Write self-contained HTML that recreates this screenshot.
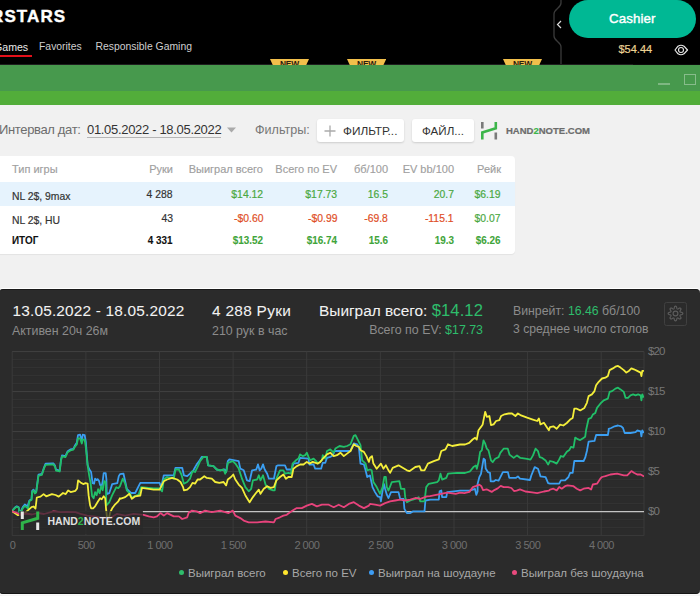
<!DOCTYPE html>
<html><head><meta charset="utf-8">
<style>
*{margin:0;padding:0;box-sizing:border-box}
html,body{width:700px;height:596px;overflow:hidden;background:#f1f1f1;font-family:"Liberation Sans",sans-serif}
.a{position:absolute;white-space:nowrap}
#hdr{position:absolute;left:0;top:0;width:700px;height:64px;background:#000}
#g1{position:absolute;left:0;top:65px;width:700px;height:26px;background:#47994d}
#g2{position:absolute;left:0;top:91px;width:700px;height:14px;background:#52ad3a}
#tbl{position:absolute;left:-6px;top:156px;width:521px;height:98px;background:#fff;border-radius:4px;box-shadow:0 1px 1px rgba(0,0,0,.06)}
#panel{position:absolute;left:-1.5px;top:288.5px;width:701px;height:305.5px;background:#2b2b2b;border-radius:4px;border-top:1.5px solid #1a1a1a;border-bottom:1.2px solid #161616;box-shadow:0 -1px 0 #fff,0 1.5px 0 #fbfbfb}
.h{font-size:11px;color:#a0a0a0;-webkit-text-stroke:0.15px currentColor}
.b{font-size:11.8px;color:#333;letter-spacing:0px;-webkit-text-stroke:0.2px currentColor;transform:scaleX(0.88);transform-origin:left;margin-top:-1px}
.b.r{transform-origin:right}
.g{color:#4aa83f}
.rd{color:#e04e26}
.bd{font-weight:bold;color:#111;letter-spacing:0px;-webkit-text-stroke:0.1px currentColor;transform:scaleX(0.84)}
.g.bd{color:#3fa53a}
.yl{font-size:11.5px;color:#777;letter-spacing:-0.9px}
.xl{font-size:11px;color:#6f6f6f;width:80px;text-align:center;letter-spacing:-0.5px;margin-top:1px;text-indent:0.5px}
.lg{font-size:11.5px;color:#a8a8a8}
.lg i{display:inline-block;width:5px;height:5px;border-radius:50%;margin-right:4px;vertical-align:2px}
</style></head><body>
<div id="hdr">
  <div class="a" style="left:-9px;top:7px;font-size:17px;font-weight:bold;color:#fff;letter-spacing:1.1px;-webkit-text-stroke:0.4px #fff">RSTARS</div>
  <div class="a" style="left:-6px;top:40.5px;font-size:10.6px;color:#e8e8e8">Games</div>
  <div style="position:absolute;left:0;top:55px;width:32px;height:2px;background:#e3101a"></div>
  <div class="a" style="left:39px;top:40.5px;font-size:10.4px;color:#cfcfcf">Favorites</div>
  <div class="a" style="left:95.5px;top:40.5px;font-size:10.4px;color:#cfcfcf">Responsible Gaming</div>
  <div style="position:absolute;left:0;top:63.5px;width:633px;height:1.5px;background:#1e1e1e"></div><svg style="position:absolute;left:270px;top:58.5px" width="39.0" height="6.5"><path d="M0 0 H39.0 L36.0 6.5 H3 Z" fill="#f2bf4b"/><text x="19.5" y="8.4" font-family="Liberation Sans" font-size="8.4" font-weight="bold" letter-spacing="-0.2" text-anchor="middle" fill="#2a2010">NEW</text></svg><svg style="position:absolute;left:346.5px;top:58.5px" width="39.2" height="6.5"><path d="M0 0 H39.2 L36.2 6.5 H3 Z" fill="#f2bf4b"/><text x="19.6" y="8.4" font-family="Liberation Sans" font-size="8.4" font-weight="bold" letter-spacing="-0.2" text-anchor="middle" fill="#2a2010">NEW</text></svg><svg style="position:absolute;left:503px;top:58.5px" width="39.0" height="6.5"><path d="M0 0 H39.0 L36.0 6.5 H3 Z" fill="#f2bf4b"/><text x="19.5" y="8.4" font-family="Liberation Sans" font-size="8.4" font-weight="bold" letter-spacing="-0.2" text-anchor="middle" fill="#2a2010">NEW</text></svg><div style="position:absolute;left:633px;top:64px;width:67px;height:1px;background:#0c0c0c"></div>
  <svg style="position:absolute;left:548px;top:0" width="20" height="64"><path d="M13 0 V3 C13 8 6 9 6 14 V36 C6 41 13 42 13 47 V64" stroke="#3a3a3a" stroke-width="1.3" fill="none"/><path d="M13 21 L9.5 24.5 L13 28" stroke="#ddd" stroke-width="1.2" fill="none"/></svg>
  <div style="position:absolute;left:569px;top:0;width:127px;height:38px;background:#00b894;border-radius:19px"></div>
  <div class="a" style="left:609px;top:10.5px;font-size:13.3px;letter-spacing:0.1px;-webkit-text-stroke:0.4px #fff;color:#fff">Cashier</div>
  <div class="a" style="left:618.5px;top:43px;font-size:11px;-webkit-text-stroke:0.2px #ecd294;color:#ecd294">$54.44</div>
  <svg style="position:absolute;left:673.2px;top:43.9px" width="16" height="12"><path d="M2 6 L5 2.2 Q8 0.3 11 2.2 L14.5 6 L11 9.8 Q8 11.7 5 9.8 Z" stroke="#e8e8e8" stroke-width="1.2" fill="none" stroke-linejoin="round"/><circle cx="8" cy="6" r="2.5" stroke="#e8e8e8" stroke-width="1.1" fill="none"/></svg>
</div>
<div id="g1"><div style="position:absolute;left:658px;top:18px;width:12px;height:1.5px;background:rgba(255,255,255,.3)"></div><div style="position:absolute;left:684px;top:9px;width:11.5px;height:11px;border:1px solid rgba(255,255,255,.35)"></div></div><div id="g2"></div>

<div id="filt">
  <div class="a" style="left:-1px;top:122px;font-size:13px;letter-spacing:-0.35px;color:#6d6d6d">Интервал дат:</div>
  <div class="a" style="left:87px;top:122px;font-size:13px;letter-spacing:-0.32px;color:#333">01.05.2022 - 18.05.2022</div>
  <div style="position:absolute;left:87px;top:137px;width:134px;height:1px;background:#b5b5b5"></div>
  <svg style="position:absolute;left:226px;top:127px" width="11" height="6"><path d="M1 0.5 H10 L5.5 5.5Z" fill="#aaa"/></svg>
  <div class="a" style="left:255px;top:123px;font-size:12.6px;color:#777">Фильтры:</div>
  <div style="position:absolute;left:317px;top:119px;width:87px;height:23px;background:#fff;border-radius:3px;box-shadow:0 1px 2px rgba(0,0,0,.15)"></div>
  <svg style="position:absolute;left:324px;top:125px" width="12" height="12"><path d="M6 0.5 V11.5 M0.5 6 H11.5" stroke="#aaa" stroke-width="1.3"/></svg>
  <div class="a" style="left:343px;top:124px;font-size:11.8px;color:#333">ФИЛЬТР...</div>
  <div style="position:absolute;left:412px;top:119px;width:62px;height:23px;background:#fff;border-radius:3px;box-shadow:0 1px 2px rgba(0,0,0,.15)"></div>
  <div class="a" style="left:422px;top:124px;font-size:11.6px;color:#333">ФАЙЛ...</div>
  <svg style="position:absolute;left:478px;top:119px" width="24" height="24"><path d="M4.3 3 V9.6 M17.8 13.4 V20.6" stroke="#7a7a7a" stroke-width="2.6"/><path d="M4.3 20.6 V13.4 L17.8 9.2 V3" stroke="#3cb54a" stroke-width="2.6" fill="none"/></svg>
  <div class="a" style="left:506px;top:125px;font-size:9.5px;font-weight:bold;color:#6c6c6c;-webkit-text-stroke:0.2px currentColor">HAND<span style="color:#3cb54a">2</span>NOTE.COM</div>
</div>
<div id="tbl">
  <div style="position:absolute;left:0;top:26px;width:521px;height:24px;background:#e6f3fd"></div>
</div>
<div id="tt">
  <div class="a h" style="left:12px;top:163px">Тип игры</div>
  <div class="a h r" style="right:527px;top:163px">Руки</div>
  <div class="a h r" style="right:437px;top:163px">Выиграл всего</div>
  <div class="a h r" style="right:363px;top:163px">Всего по EV</div>
  <div class="a h r" style="right:312px;top:163px">бб/100</div>
  <div class="a h r" style="right:246px;top:163px">EV bb/100</div>
  <div class="a h r" style="right:199px;top:163px">Рейк</div>

  <div class="a b" style="left:12px;top:189.5px">NL 2$, 9max</div>
  <div class="a b r" style="right:527px;top:187.5px">4 288</div>
  <div class="a b r g" style="right:437px;top:187.5px">$14.12</div>
  <div class="a b r g" style="right:363px;top:187.5px">$17.73</div>
  <div class="a b r g" style="right:312px;top:187.5px">16.5</div>
  <div class="a b r g" style="right:246px;top:187.5px">20.7</div>
  <div class="a b r g" style="right:199px;top:187.5px">$6.19</div>

  <div class="a b" style="left:12px;top:213.5px">NL 2$, HU</div>
  <div class="a b r" style="right:527px;top:211.5px">43</div>
  <div class="a b r rd" style="right:437px;top:211.5px">-$0.60</div>
  <div class="a b r rd" style="right:363px;top:211.5px">-$0.99</div>
  <div class="a b r rd" style="right:312px;top:211.5px">-69.8</div>
  <div class="a b r rd" style="right:246px;top:211.5px">-115.1</div>
  <div class="a b r g" style="right:199px;top:211.5px">$0.07</div>

  <div class="a b bd" style="left:12px;top:234px">ИТОГ</div>
  <div class="a b r bd" style="right:527px;top:234px">4 331</div>
  <div class="a b r g bd" style="right:437px;top:234px">$13.52</div>
  <div class="a b r g bd" style="right:363px;top:234px">$16.74</div>
  <div class="a b r g bd" style="right:312px;top:234px">15.6</div>
  <div class="a b r g bd" style="right:246px;top:234px">19.3</div>
  <div class="a b r g bd" style="right:199px;top:234px">$6.26</div>
</div>
<div id="panel"></div>

<div id="ph">
  <div class="a" style="left:12.5px;top:302px;font-size:15.4px;letter-spacing:0.18px;-webkit-text-stroke:0.05px #f2f2f2;color:#f2f2f2">13.05.2022 - 18.05.2022</div>
  <div class="a" style="left:12px;top:324px;font-size:12.4px;color:#8c8c8c">Активен 20ч 26м</div>
  <div class="a" style="left:212px;top:302px;font-size:15.4px;letter-spacing:0.3px;-webkit-text-stroke:0.05px #f2f2f2;color:#f2f2f2">4 288 Руки</div>
  <div class="a" style="left:212px;top:324px;font-size:12.4px;color:#8c8c8c">210 рук в час</div>
  <div class="a" style="right:217px;top:301px;font-size:15.4px;letter-spacing:0px;-webkit-text-stroke:0.05px #f2f2f2;color:#f2f2f2">Выиграл всего: <span style="font-size:16.6px;color:#2ebd6b;-webkit-text-stroke:0;letter-spacing:0.1px">$14.12</span></div>
  <div class="a" style="right:217px;top:323px;font-size:12.4px;color:#8c8c8c">Всего по EV: <span style="color:#2ebd6b">$17.73</span></div>
  <div class="a" style="left:513px;top:304px;font-size:12.3px;color:#8c8c8c">Винрейт: <span style="color:#2ebd6b">16.46</span> бб/100</div>
  <div class="a" style="left:513px;top:321.5px;font-size:12.2px;color:#8c8c8c">3 среднее число столов</div>
  <div style="position:absolute;left:663.5px;top:302px;width:23.5px;height:23.5px;border:1px solid #404040;border-radius:2.5px"></div>
  <svg style="position:absolute;left:666.8px;top:305.1px" width="17" height="17" viewBox="0 0 17 17"><path d="M8.50 1.15 L8.73 1.18 L8.95 1.27 L9.17 1.43 L9.37 1.65 L9.54 1.93 L9.68 2.33 L9.75 2.92 L9.85 3.26 L9.95 3.52 L10.05 3.72 L10.16 3.88 L10.29 3.98 L10.43 4.04 L10.59 4.06 L10.78 4.03 L11.00 3.95 L11.26 3.84 L11.56 3.68 L12.03 3.31 L12.41 3.12 L12.73 3.04 L13.03 3.03 L13.29 3.07 L13.51 3.16 L13.70 3.30 L13.84 3.49 L13.93 3.71 L13.97 3.97 L13.96 4.27 L13.88 4.59 L13.69 4.97 L13.32 5.44 L13.16 5.74 L13.05 6.00 L12.97 6.22 L12.94 6.41 L12.96 6.57 L13.02 6.71 L13.12 6.84 L13.28 6.95 L13.48 7.05 L13.74 7.15 L14.08 7.25 L14.67 7.32 L15.07 7.46 L15.35 7.63 L15.57 7.83 L15.73 8.05 L15.82 8.27 L15.85 8.50 L15.82 8.73 L15.73 8.95 L15.57 9.17 L15.35 9.37 L15.07 9.54 L14.67 9.68 L14.08 9.75 L13.74 9.85 L13.48 9.95 L13.28 10.05 L13.12 10.16 L13.02 10.29 L12.96 10.43 L12.94 10.59 L12.97 10.78 L13.05 11.00 L13.16 11.26 L13.32 11.56 L13.69 12.03 L13.88 12.41 L13.96 12.73 L13.97 13.03 L13.93 13.29 L13.84 13.51 L13.70 13.70 L13.51 13.84 L13.29 13.93 L13.03 13.97 L12.73 13.96 L12.41 13.88 L12.03 13.69 L11.56 13.32 L11.26 13.16 L11.00 13.05 L10.78 12.97 L10.59 12.94 L10.43 12.96 L10.29 13.02 L10.16 13.12 L10.05 13.28 L9.95 13.48 L9.85 13.74 L9.75 14.08 L9.68 14.67 L9.54 15.07 L9.37 15.35 L9.17 15.57 L8.95 15.73 L8.73 15.82 L8.50 15.85 L8.27 15.82 L8.05 15.73 L7.83 15.57 L7.63 15.35 L7.46 15.07 L7.32 14.67 L7.25 14.08 L7.15 13.74 L7.05 13.48 L6.95 13.28 L6.84 13.12 L6.71 13.02 L6.57 12.96 L6.41 12.94 L6.22 12.97 L6.00 13.05 L5.74 13.16 L5.44 13.32 L4.97 13.69 L4.59 13.88 L4.27 13.96 L3.97 13.97 L3.71 13.93 L3.49 13.84 L3.30 13.70 L3.16 13.51 L3.07 13.29 L3.03 13.03 L3.04 12.73 L3.12 12.41 L3.31 12.03 L3.68 11.56 L3.84 11.26 L3.95 11.00 L4.03 10.78 L4.06 10.59 L4.04 10.43 L3.98 10.29 L3.88 10.16 L3.72 10.05 L3.52 9.95 L3.26 9.85 L2.92 9.75 L2.33 9.68 L1.93 9.54 L1.65 9.37 L1.43 9.17 L1.27 8.95 L1.18 8.73 L1.15 8.50 L1.18 8.27 L1.27 8.05 L1.43 7.83 L1.65 7.63 L1.93 7.46 L2.33 7.32 L2.92 7.25 L3.26 7.15 L3.52 7.05 L3.72 6.95 L3.88 6.84 L3.98 6.71 L4.04 6.57 L4.06 6.41 L4.03 6.22 L3.95 6.00 L3.84 5.74 L3.68 5.44 L3.31 4.97 L3.12 4.59 L3.04 4.27 L3.03 3.97 L3.07 3.71 L3.16 3.49 L3.30 3.30 L3.49 3.16 L3.71 3.07 L3.97 3.03 L4.27 3.04 L4.59 3.12 L4.97 3.31 L5.44 3.68 L5.74 3.84 L6.00 3.95 L6.22 4.03 L6.41 4.06 L6.57 4.04 L6.71 3.98 L6.84 3.88 L6.95 3.72 L7.05 3.52 L7.15 3.26 L7.25 2.92 L7.32 2.33 L7.46 1.93 L7.63 1.65 L7.83 1.43 L8.05 1.27 L8.27 1.18Z" stroke="#5c5c5c" stroke-width="1.15" fill="none" stroke-linejoin="round"/><circle cx="8.5" cy="8.5" r="2.4" stroke="#5c5c5c" stroke-width="1.15" fill="none"/></svg>
</div>
<svg style="position:absolute;left:0;top:0" width="700" height="596">
<line x1="12" x2="644" y1="535.6" y2="535.6" stroke="#3a3a3a" stroke-width="1"/>
<line x1="12" x2="644" y1="527.6" y2="527.6" stroke="#333333" stroke-width="1"/>
<line x1="12" x2="644" y1="519.6" y2="519.6" stroke="#333333" stroke-width="1"/>
<line x1="12" x2="644" y1="511.6" y2="511.6" stroke="#424242" stroke-width="1"/>
<line x1="12" x2="644" y1="503.6" y2="503.6" stroke="#333333" stroke-width="1"/>
<line x1="12" x2="644" y1="495.6" y2="495.6" stroke="#333333" stroke-width="1"/>
<line x1="12" x2="644" y1="487.6" y2="487.6" stroke="#333333" stroke-width="1"/>
<line x1="12" x2="644" y1="479.6" y2="479.6" stroke="#333333" stroke-width="1"/>
<line x1="12" x2="644" y1="471.6" y2="471.6" stroke="#424242" stroke-width="1"/>
<line x1="12" x2="644" y1="463.6" y2="463.6" stroke="#333333" stroke-width="1"/>
<line x1="12" x2="644" y1="455.6" y2="455.6" stroke="#333333" stroke-width="1"/>
<line x1="12" x2="644" y1="447.6" y2="447.6" stroke="#333333" stroke-width="1"/>
<line x1="12" x2="644" y1="439.6" y2="439.6" stroke="#333333" stroke-width="1"/>
<line x1="12" x2="644" y1="431.6" y2="431.6" stroke="#424242" stroke-width="1"/>
<line x1="12" x2="644" y1="423.6" y2="423.6" stroke="#333333" stroke-width="1"/>
<line x1="12" x2="644" y1="415.6" y2="415.6" stroke="#333333" stroke-width="1"/>
<line x1="12" x2="644" y1="407.6" y2="407.6" stroke="#333333" stroke-width="1"/>
<line x1="12" x2="644" y1="399.6" y2="399.6" stroke="#333333" stroke-width="1"/>
<line x1="12" x2="644" y1="391.6" y2="391.6" stroke="#424242" stroke-width="1"/>
<line x1="12" x2="644" y1="383.6" y2="383.6" stroke="#333333" stroke-width="1"/>
<line x1="12" x2="644" y1="375.6" y2="375.6" stroke="#333333" stroke-width="1"/>
<line x1="12" x2="644" y1="367.6" y2="367.6" stroke="#333333" stroke-width="1"/>
<line x1="12" x2="644" y1="359.6" y2="359.6" stroke="#333333" stroke-width="1"/>
<line x1="12" x2="644" y1="351.6" y2="351.6" stroke="#424242" stroke-width="1"/>
<line x1="12.2" x2="12.2" y1="351.6" y2="535.6" stroke="#3a3a3a" stroke-width="1"/>
<line x1="85.9" x2="85.9" y1="351.6" y2="535.6" stroke="#3a3a3a" stroke-width="1"/>
<line x1="159.5" x2="159.5" y1="351.6" y2="535.6" stroke="#3a3a3a" stroke-width="1"/>
<line x1="233.1" x2="233.1" y1="351.6" y2="535.6" stroke="#3a3a3a" stroke-width="1"/>
<line x1="306.7" x2="306.7" y1="351.6" y2="535.6" stroke="#3a3a3a" stroke-width="1"/>
<line x1="380.4" x2="380.4" y1="351.6" y2="535.6" stroke="#3a3a3a" stroke-width="1"/>
<line x1="454.0" x2="454.0" y1="351.6" y2="535.6" stroke="#3a3a3a" stroke-width="1"/>
<line x1="527.6" x2="527.6" y1="351.6" y2="535.6" stroke="#3a3a3a" stroke-width="1"/>
<line x1="601.2" x2="601.2" y1="351.6" y2="535.6" stroke="#3a3a3a" stroke-width="1"/>
<line x1="644" x2="644" y1="351.6" y2="535.6" stroke="#3a3a3a" stroke-width="1"/>
</svg>











<!--LINES--><svg id="lines" style="position:absolute;left:0;top:0" width="700" height="596"><defs><clipPath id="pc"><rect x="12" y="340" width="632" height="196"/></clipPath></defs><g clip-path="url(#pc)" fill="none" stroke-width="1.8" stroke-linejoin="round" stroke-linecap="round">
<line x1="143" x2="644" y1="511.6" y2="511.6" stroke="#c4c4c4" stroke-width="1.2"/>
<polyline points="12.0,511.2 14.7,507.8 16.7,506.3 18.7,507.3 19.5,512.0 21.0,511.0 22.8,507.0 24.8,504.5 27.5,506.3 29.5,500.4 31.5,499.1 32.2,491.0 33.5,489.7 34.8,492.4 36.2,491.7 38.5,474.7 41.9,474.0 44.1,467.3 45.6,463.6 53.3,463.3 55.0,465.6 56.0,469.6 59.7,470.5 61.0,459.6 62.0,455.5 65.4,456.2 67.7,451.2 70.4,449.5 73.4,448.8 74.8,445.8 76.8,442.8 78.0,435.1 80.1,434.7 81.8,440.8 82.8,434.7 84.7,435.1 85.8,441.8 87.6,465.0 89.1,469.0 91.1,472.0 92.6,483.1 94.1,483.6 95.1,478.6 96.6,480.1 97.6,479.1 99.1,481.1 100.1,485.1 101.7,486.1 102.7,481.1 103.7,473.1 105.7,473.1 106.4,479.1 106.7,494.2 109.2,493.2 111.2,487.2 112.2,484.1 117.3,483.1 118.8,476.1 120.0,474.1 123.5,473.7 126.8,488.8 131.0,493.0 135.2,493.0 140.3,482.9 159.6,482.9 161.2,487.1 163.8,475.3 173.8,475.3 175.5,467.8 182.2,467.8 183.9,475.3 187.2,476.2 190.0,473.7 193.4,470.3 196.7,464.4 199.2,461.1 201.7,456.9 206.8,456.9 208.1,465.3 213.5,466.1 216.8,469.5 220.2,470.3 224.4,469.5 226.1,472.0 227.8,461.1 229.4,459.4 238.7,461.1 240.3,468.6 243.7,470.3 247.0,480.4 249.6,481.2 252.1,470.3 256.3,469.5 258.0,464.4 259.6,470.3 261.3,468.6 263.0,464.4 264.7,469.5 267.2,473.7 268.9,478.7 273.9,478.7 276.4,466.1 278.1,465.3 280.0,465.3 285.0,465.3 286.7,469.5 291.7,469.5 293.4,463.6 298.5,462.8 300.1,457.8 308.5,458.6 309.4,464.5 313.6,464.5 315.2,468.7 321.1,468.7 322.8,462.8 325.3,462.8 327.0,457.8 330.3,456.9 332.9,455.2 334.5,451.0 350.5,451.0 352.1,446.8 353.8,443.5 357.2,444.3 358.9,447.7 360.5,463.6 363.9,464.5 365.6,470.3 367.2,477.0 370.0,475.4 372.5,487.1 375.0,492.1 377.6,496.3 380.1,497.2 380.9,501.4 382.6,490.5 383.8,483.8 385.1,488.8 386.8,494.7 388.5,498.0 391.0,492.1 398.5,492.1 400.2,498.9 403.6,498.9 404.4,508.9 406.9,513.1 410.3,513.1 412.8,511.4 424.5,511.4 425.4,500.5 430.4,499.7 438.8,499.7 439.6,491.3 441.3,490.5 442.1,497.2 446.3,497.2 447.2,492.1 453.9,491.3 460.0,490.6 469.4,490.6 472.9,489.7 475.0,488.9 476.3,494.9 477.6,491.4 477.6,483.9 479.3,477.2 481.0,473.9 483.6,458.6 485.0,460.0 485.7,468.6 487.9,472.1 490.0,472.9 490.7,481.4 493.6,481.4 495.7,480.0 498.6,480.7 500.0,477.9 502.9,472.1 507.9,472.1 509.3,477.9 515.7,477.9 517.9,476.4 520.0,478.6 530.0,480.0 531.3,475.5 534.7,467.1 538.0,468.8 540.5,476.4 545.6,477.2 548.1,483.1 550.0,483.7 559.2,483.7 560.9,480.3 565.1,480.3 568.5,477.0 570.1,472.8 572.7,472.8 574.3,461.0 583.6,461.0 585.2,457.7 586.9,451.0 588.6,441.7 594.5,440.9 596.1,435.0 607.9,435.0 608.7,430.0 608.7,428.8 611.2,428.0 614.6,426.3 618.0,425.5 621.3,426.3 623.0,428.0 624.7,433.0 630.5,433.0 635.6,432.2 637.2,430.5 640.6,431.3 641.4,436.4 642.3,430.5 643.3,432.2" stroke="#3b9ff2"/>
<polyline points="12.0,511.2 14.7,508.2 16.7,506.8 18.7,507.8 19.5,512.5 21.0,512.0 22.8,508.3 24.8,506.0 27.0,507.5 28.1,508.5 29.5,501.0 31.5,500.0 32.2,492.0 33.5,490.5 34.8,493.5 36.2,492.5 38.5,475.7 41.9,474.8 44.1,468.1 45.6,464.8 53.3,464.3 55.0,466.6 56.0,470.6 59.7,471.5 61.0,460.6 62.0,456.4 65.4,457.2 67.7,452.2 70.4,450.5 73.4,449.7 74.8,446.8 76.8,444.5 78.0,438.4 80.1,438.4 81.8,443.5 82.8,439.3 84.7,439.8 85.8,446.8 87.6,465.0 89.1,475.1 90.6,483.1 92.1,496.2 93.6,498.2 95.1,492.2 96.6,495.2 98.1,489.2 99.6,493.2 101.1,486.1 102.7,490.2 104.2,481.1 105.7,482.1 106.4,505.3 109.2,502.3 112.2,495.2 116.3,487.2 118.3,488.2 120.0,486.1 122.7,478.7 125.2,483.7 126.8,490.4 130.2,493.8 131.9,498.0 134.4,496.3 138.6,494.6 140.3,489.6 141.1,487.1 148.7,487.9 153.7,488.4 159.6,488.4 162.1,491.3 163.8,479.5 167.1,477.0 173.8,478.7 175.5,469.5 178.9,469.5 181.4,474.5 183.9,483.7 187.2,482.0 190.0,478.7 192.5,471.1 195.0,472.0 197.6,466.9 200.1,461.1 203.4,456.9 206.8,456.9 208.1,465.3 213.5,466.1 216.8,469.5 220.2,470.3 223.6,469.5 225.2,473.7 226.6,470.3 227.8,462.8 232.8,461.1 235.3,463.6 238.7,468.6 242.0,478.7 245.4,487.1 248.7,491.3 251.2,488.8 252.9,480.4 257.1,479.5 258.8,475.3 260.5,480.4 263.0,475.3 265.5,484.6 268.9,488.8 273.1,490.4 274.7,490.4 276.4,478.7 280.0,470.3 283.4,470.3 285.0,473.7 288.4,472.9 290.9,473.7 292.6,463.6 295.9,460.3 298.5,458.6 300.1,454.4 302.7,456.1 305.2,455.2 306.8,452.7 308.5,456.9 310.2,460.3 313.6,458.6 316.1,461.1 317.8,463.6 321.9,460.3 322.8,455.2 325.3,458.6 327.0,451.0 330.3,449.4 333.7,452.7 335.4,448.5 339.6,446.0 343.8,446.8 347.1,446.0 350.5,444.3 352.1,440.1 353.8,435.9 355.5,435.1 358.0,440.1 360.5,445.2 362.2,460.3 365.6,463.6 367.2,470.3 370.0,469.5 371.7,470.3 373.4,482.1 376.7,487.1 380.1,493.8 382.6,487.1 384.3,477.0 385.9,477.0 386.8,487.1 388.5,490.5 391.8,482.1 399.4,481.2 401.0,488.8 404.4,488.8 405.2,497.2 406.9,502.2 410.3,500.5 415.3,498.9 418.7,497.2 420.3,501.4 424.5,501.4 426.2,487.1 428.7,483.8 437.1,482.1 438.8,480.4 440.5,473.7 442.1,479.6 446.3,477.9 448.0,473.7 457.2,472.9 460.0,473.0 465.0,473.0 470.1,471.3 473.4,467.1 475.9,465.5 476.8,468.8 478.5,462.1 480.1,452.0 481.8,450.4 483.5,440.3 485.2,443.7 486.8,448.7 488.5,450.4 491.0,460.4 492.7,462.1 495.2,458.8 498.6,457.1 500.3,452.9 503.6,448.7 507.8,448.7 509.5,454.6 513.7,457.9 517.0,455.4 520.4,457.9 527.1,458.8 530.5,459.6 533.0,455.4 535.5,448.7 538.0,451.2 539.7,457.1 542.2,457.9 545.6,460.4 548.1,464.6 550.0,461.0 553.4,461.9 556.7,463.6 559.2,459.4 560.9,456.0 563.4,456.8 566.8,451.8 569.3,450.1 571.0,446.8 573.5,447.6 575.2,437.6 577.7,439.2 580.2,440.1 582.7,438.4 585.2,436.7 586.1,430.0 588.6,418.8 591.1,417.9 592.8,414.6 595.3,412.9 597.0,407.9 600.3,403.7 603.7,400.3 607.9,398.6 609.6,391.9 612.1,391.1 615.4,388.6 618.0,387.7 620.5,389.4 623.8,391.9 625.5,397.8 628.0,397.8 630.5,395.3 633.1,394.4 635.6,395.3 638.1,394.4 640.6,395.3 641.4,400.3 642.3,394.4 643.3,396.9" stroke="#21bf68"/>
<polyline points="12.0,511.2 18.0,515.2 24.8,513.2 31.5,507.1 33.5,506.5 35.5,508.5 36.8,497.5 40.5,496.6 43.6,494.1 46.2,496.3 51.9,494.1 55.6,495.0 58.7,496.6 63.0,493.0 65.7,494.1 68.1,490.4 70.7,492.1 75.4,490.8 77.1,488.4 78.1,480.4 80.5,482.4 83.2,484.1 85.5,483.2 87.6,483.6 88.6,495.2 90.1,505.3 91.1,508.3 93.1,508.3 95.1,506.3 98.1,501.3 100.1,498.2 101.7,499.2 103.7,496.2 105.2,498.2 106.0,508.3 107.0,517.4 108.7,519.4 110.2,512.3 112.2,508.3 115.2,504.3 118.3,501.3 120.0,498.2 120.1,498.8 125.2,497.1 129.4,493.8 131.9,498.8 135.2,496.3 140.3,495.5 141.9,487.9 148.7,488.8 153.7,489.6 159.6,489.6 163.8,481.2 167.1,479.5 172.1,477.9 177.2,479.5 180.5,482.0 183.1,487.1 183.9,490.4 187.2,489.6 190.0,487.1 192.5,482.9 195.0,483.7 197.6,479.5 200.1,479.5 204.3,476.2 206.8,477.9 211.8,478.7 215.2,482.0 219.4,482.9 223.6,482.0 226.1,485.4 227.8,479.5 231.1,477.0 233.3,474.5 235.3,479.5 238.7,484.6 242.0,487.9 245.4,495.5 249.6,502.2 252.9,497.1 255.4,493.8 258.8,489.6 260.5,493.8 263.8,488.8 267.2,486.2 270.5,487.9 273.9,487.1 276.4,480.4 280.0,477.0 283.4,474.5 285.9,478.7 288.4,477.0 291.7,477.0 293.4,468.7 296.8,466.1 300.1,464.5 303.5,464.5 306.8,461.9 309.4,463.6 312.7,461.9 317.8,463.6 320.3,461.9 323.6,457.8 327.0,454.4 330.3,452.7 333.7,456.1 337.0,455.2 340.4,452.7 343.8,456.1 347.1,453.6 350.5,451.0 353.8,444.3 356.3,446.0 358.9,446.8 360.5,450.2 363.9,451.9 366.4,456.1 368.9,461.9 370.0,457.8 372.0,456.1 373.4,463.6 376.7,468.7 380.9,463.6 383.4,468.7 385.9,465.3 388.5,470.3 390.1,472.9 392.7,467.8 398.5,465.3 402.7,467.8 406.9,470.3 409.4,471.2 415.3,467.0 419.5,466.1 421.2,470.3 424.5,470.3 427.9,463.6 433.8,461.1 438.8,459.4 441.3,451.0 445.5,449.4 448.0,444.3 452.2,446.0 460.0,444.5 465.0,444.5 469.2,442.8 472.6,439.5 475.1,437.8 476.8,439.5 478.5,430.2 481.0,426.9 482.7,424.4 483.5,420.2 485.2,411.8 486.8,416.8 489.4,416.0 491.0,425.2 493.6,424.4 496.1,421.0 499.4,420.2 501.1,416.0 504.5,414.3 508.7,413.5 512.0,413.5 515.4,416.0 517.9,413.5 520.4,415.1 527.1,417.7 532.1,419.3 537.2,421.0 538.9,418.5 540.5,424.4 543.9,422.7 547.2,427.7 548.9,430.2 550.0,427.1 553.4,426.3 556.7,428.8 560.1,424.6 563.4,425.5 566.8,423.0 570.1,419.6 572.7,417.9 574.3,408.7 576.8,408.7 580.2,410.4 584.4,407.9 586.9,402.8 588.6,396.1 591.9,394.4 594.5,391.1 596.1,385.2 598.7,381.8 602.0,378.5 605.4,377.7 607.9,376.0 609.6,370.1 612.9,368.4 615.4,366.7 618.0,365.9 620.5,367.6 623.8,370.1 626.3,372.6 628.9,370.9 631.4,368.4 633.9,369.3 637.2,370.9 640.6,372.6 641.4,376.0 642.3,370.9 643.3,370.9" stroke="#f4ee3a"/>
<polyline points="12.0,511.4 16.0,512.5 20.0,514.5 26.0,513.5 32.0,514.5 38.0,513.0 44.0,514.0 53.6,511.4 60.3,512.2 67.0,511.9 75.4,512.2 80.5,513.9 87.2,515.6 93.9,516.4 100.0,517.3 110.1,518.1 116.8,513.9 125.2,515.6 133.6,513.9 143.6,514.8 148.7,516.4 153.7,517.3 157.0,516.4 160.4,513.1 163.8,515.6 167.1,513.1 173.8,516.4 178.9,516.4 182.2,519.0 187.2,517.3 188.9,512.2 190.0,512.2 191.7,510.6 196.7,511.4 200.1,513.1 205.1,510.6 211.8,512.2 220.2,510.6 228.6,513.1 232.8,510.6 235.3,515.6 240.3,518.1 243.7,520.6 248.7,522.3 257.1,522.3 265.5,521.5 273.9,522.3 275.6,519.0 280.0,517.3 283.4,515.6 286.7,514.8 290.1,512.3 292.6,510.6 296.8,508.1 301.8,508.1 306.8,505.6 311.9,503.9 316.9,506.4 321.9,504.7 328.7,504.7 333.7,507.2 338.7,504.7 343.8,507.2 348.8,503.9 353.8,502.2 358.9,505.6 363.9,508.1 368.9,505.6 370.0,503.9 375.0,504.7 380.1,505.6 385.1,503.1 390.1,501.4 395.2,500.5 400.2,499.7 405.2,500.5 410.3,499.7 415.3,498.0 420.3,498.9 427.0,496.3 430.0,496.1 438.6,494.4 447.1,492.7 455.7,493.9 460.0,492.7 464.3,493.1 469.4,491.9 472.9,487.1 476.3,485.9 479.3,484.6 481.4,486.3 483.1,490.1 486.6,489.3 491.7,491.9 494.3,490.1 497.7,488.4 500.7,485.9 503.7,487.1 508.0,487.1 511.4,488.0 514.0,491.0 516.6,490.6 520.0,489.3 525.4,491.5 532.1,492.3 537.2,493.2 543.9,491.5 548.9,490.6 550.0,489.6 553.4,488.7 556.7,490.4 559.2,487.0 561.7,488.7 565.1,486.2 567.6,485.4 573.5,486.2 576.8,488.7 580.2,490.4 583.6,488.7 588.6,487.9 591.1,489.6 592.8,484.5 597.0,483.7 600.3,478.7 602.0,477.0 605.4,476.1 610.4,474.5 617.1,473.6 623.8,475.3 627.2,475.3 631.4,471.1 633.9,472.8 637.2,474.5 640.6,474.5 643.3,476.1" stroke="#e8437c"/>
</g></svg><!--/LINES-->
<div id="wm">
  <div style="position:absolute;left:18.5px;top:510.5px;width:124.5px;height:23px;background:rgba(40,40,40,0.72)"></div>
  <svg style="position:absolute;left:15px;top:508px" width="30" height="26"><path d="M7.3 3.5 V11" stroke="#e6e6e6" stroke-width="3"/><path d="M22.7 14.5 V22" stroke="#e6e6e6" stroke-width="3"/><path d="M7.3 22 V14.8 L22.7 10.3 V3.5" stroke="#2fb54a" stroke-width="3" fill="none"/></svg>
  <div class="a" style="left:47.5px;top:515px;font-size:10.5px;font-weight:bold;color:#e0e0e0">HAND<span style="color:#2fb54a">2</span>NOTE.COM</div>
</div>

<div id="axl">
<div class="a yl" style="left:648px;top:504.6px">$0</div><div class="a yl" style="left:648px;top:464.6px">$5</div><div class="a yl" style="left:648px;top:424.6px">$10</div><div class="a yl" style="left:648px;top:384.6px">$15</div><div class="a yl" style="left:648px;top:344.6px">$20</div><div class="a xl" style="left:-27.8px;top:538px">0</div><div class="a xl" style="left:45.9px;top:538px">500</div><div class="a xl" style="left:119.5px;top:538px">1 000</div><div class="a xl" style="left:193.1px;top:538px">1 500</div><div class="a xl" style="left:266.7px;top:538px">2 000</div><div class="a xl" style="left:340.4px;top:538px">2 500</div><div class="a xl" style="left:414.0px;top:538px">3 000</div><div class="a xl" style="left:487.6px;top:538px">3 500</div><div class="a xl" style="left:561.2px;top:538px">4 000</div>
</div>
<div id="leg">
  <div class="a lg" style="left:179px;top:567px"><i style="background:#2ebd6b"></i>Выиграл всего</div>
  <div class="a lg" style="left:283px;top:567px"><i style="background:#ffe62e"></i>Всего по EV</div>
  <div class="a lg" style="left:369px;top:567px"><i style="background:#3d9df5"></i>Выиграл на шоудауне</div>
  <div class="a lg" style="left:512px;top:567px"><i style="background:#e94a7d"></i>Выиграл без шоудауна</div>
</div>
</body></html>
